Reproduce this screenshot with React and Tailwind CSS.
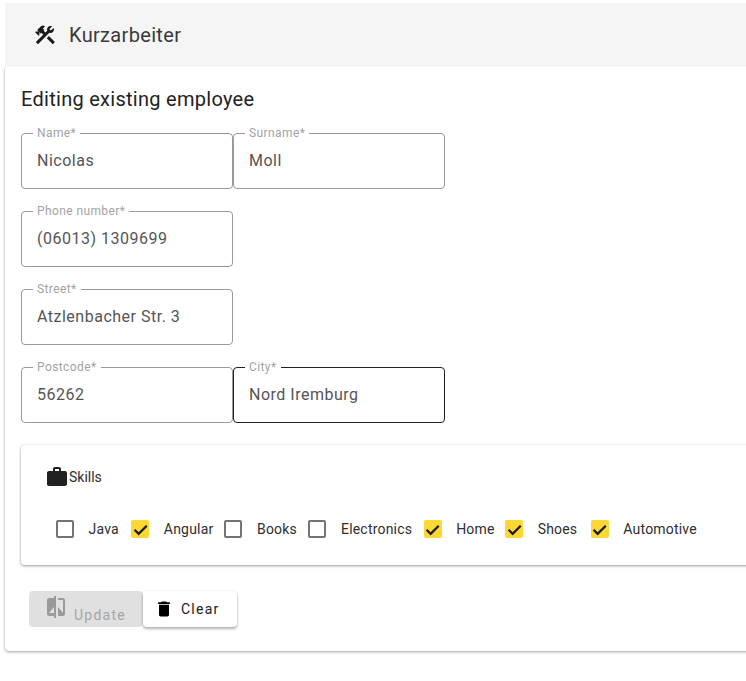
import React from "react";
import { MdConstruction, MdWork, MdCompare, MdDelete } from "react-icons/md";

function Field({ label, value, focused }) {
  return (
    <fieldset className={`w-[212px] h-[62px] rounded-[4px] border px-[11px] min-w-0 ${focused ? "border-[#202020]" : "border-[#9a9a9a]"}`}>
      <legend className="ml-0 px-[4px] text-[12px] leading-[1] h-[12px] tracking-[0.4px] text-[#a3a3a3]">{label}*</legend>
      <div className="pl-[4px] mt-[10px] text-[16px] leading-[24px] tracking-[0.5px] text-[#555555]">{value}</div>
    </fieldset>
  );
}

function Check({ label, checked, mr }) {
  return (
    <div className={`flex items-center ${mr}`}>
      {checked ? (
        <span className="w-[18px] h-[18px] rounded-[2px] bg-[#fdd835] flex items-center justify-center text-[#1a1a1a]">
          <svg width="15" height="15" viewBox="0 0 24 24" fill="none" stroke="currentColor" strokeWidth="3.6"><path d="M2.5 12.5 9 19 22 6" /></svg>
        </span>
      ) : (
        <span className="w-[18px] h-[18px] rounded-[2px] border-2 border-[#757575]" />
      )}
      <span className="ml-[14.5px] text-[14px] leading-[20px] tracking-[0.2px] text-[#2e2e2e]">{label}</span>
    </div>
  );
}

export default function App() {
  return (
    <div className="h-[681px] w-[746px] overflow-hidden bg-white pt-[3px] pl-[5px] font-['Roboto',sans-serif]">
      <div className="relative z-10 w-[800px] h-[64px] bg-[#f5f5f5] flex items-center pl-[28px]">
        <MdConstruction size={24} className="text-[#1a1a1a]" />
        <span className="ml-[12px] text-[20px] leading-[24px] tracking-[0.33px] text-[#3a3a3a]">Kurzarbeiter</span>
      </div>
      <div className="w-[800px] h-[584px] rounded-b-[4px] bg-white shadow-[0_1px_3px_rgba(0,0,0,0.35),0_0_2px_rgba(0,0,0,0.08)] px-[16px] pt-[20px]">
        <h2 className="text-[20px] leading-[24px] tracking-[0.28px] font-normal text-[#222222]">Editing existing employee</h2>
        <div className="mt-[16px] flex flex-col gap-[16px]">
          <div className="flex"><Field label="Name" value="Nicolas" /><Field label="Surname" value="Moll" /></div>
          <div className="flex"><Field label="Phone number" value="(06013) 1309699" /></div>
          <div className="flex"><Field label="Street" value="Atzlenbacher Str. 3" /></div>
          <div className="flex"><Field label="Postcode" value="56262" /><Field label="City" value="Nord Iremburg" focused /></div>
        </div>
        <div className="mt-[22px] w-[780px] h-[120px] rounded-[4px] bg-white shadow-[0_1px_3px_rgba(0,0,0,0.4),0_0_2px_rgba(0,0,0,0.06)] pl-[24px] pt-[20px]">
          <div className="flex items-center h-[24px]">
            <MdWork size={24} className="text-[#212121]" />
            <span className="text-[14px] leading-[20px] text-[#2e2e2e]">Skills</span>
          </div>
          <div className="mt-[30px] ml-[11px] flex items-center">
            <Check label="Java" mr="mr-[12.5px]" />
            <Check label="Angular" checked mr="mr-[11px]" />
            <Check label="Books" mr="mr-[11.5px]" />
            <Check label="Electronics" mr="mr-[11.5px]" />
            <Check label="Home" checked mr="mr-[10.5px]" />
            <Check label="Shoes" checked mr="mr-[13.5px]" />
            <Check label="Automotive" checked mr="" />
          </div>
        </div>
        <div className="mt-[26px] ml-[8px] flex">
          <button className="w-[114px] h-[36px] rounded-[4px] bg-[#e0e0e0] text-[14px] tracking-[1.25px] text-[#a6a6a6] flex items-center justify-center gap-[6px]">
            <MdCompare size={24} className="text-[#9a9a9a] -mt-[5px] -ml-[2px]" />
            <span className="mt-[13px]">Update</span>
          </button>
          <button className="w-[94px] h-[36px] rounded-[4px] bg-white shadow-[0_2px_3px_rgba(0,0,0,0.3),0_0_2px_rgba(0,0,0,0.1)] text-[14px] tracking-[1.25px] text-[#212121] flex items-center justify-start pl-[11px] gap-[7px]">
            <MdDelete size={20} className="text-black" />
            <span>Clear</span>
          </button>
        </div>
      </div>
    </div>
  );
}
